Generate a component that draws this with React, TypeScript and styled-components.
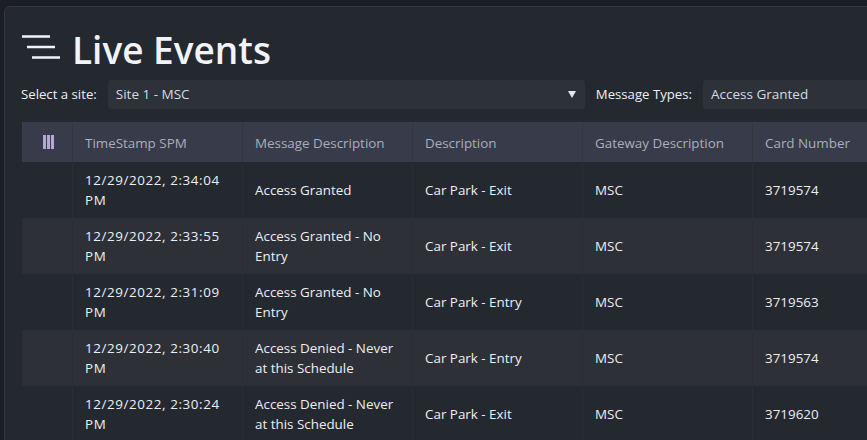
import styled, { createGlobalStyle } from "styled-components";

const GlobalStyle = createGlobalStyle`
  html, body {
    margin: 0;
    height: 100%;
    overflow: hidden;
    background: #1b1e26;
  }
  body {
    font-family: "Open Sans", "Noto Sans", sans-serif;
  }
`;

const events = [
  { time: "12/29/2022, 2:34:04 PM", message: "Access Granted", description: "Car Park - Exit", card: "3719574" },
  { time: "12/29/2022, 2:33:55 PM", message: "Access Granted - No Entry", description: "Car Park - Exit", card: "3719574" },
  { time: "12/29/2022, 2:31:09 PM", message: "Access Granted - No Entry", description: "Car Park - Entry", card: "3719563" },
  { time: "12/29/2022, 2:30:40 PM", message: "Access Denied - Never at this Schedule", description: "Car Park - Entry", card: "3719574" },
  { time: "12/29/2022, 2:30:24 PM", message: "Access Denied - Never at this Schedule", description: "Car Park - Exit", card: "3719620" },
];

export default function App() {
  return (
    <>
      <GlobalStyle />
      <Page>
        <Card>
          <TitleRow>
            <MenuIcon width="38" height="24" viewBox="0 0 38 24">
              <path d="M0 1.5h28M5 12h28M10 22.5h28" stroke="#f0f3f7" strokeWidth="2.6" fill="none" />
            </MenuIcon>
            <Title>Live Events</Title>
          </TitleRow>
          <Filters>
            <Label>Select a site:</Label>
            <Select $width={477}>
              Site 1 - MSC
              <Caret />
            </Select>
            <Label>Message Types:</Label>
            <Select $width={300}>Access Granted</Select>
          </Filters>
          <Table>
            <HeaderRow>
              <HeadCell $icon>
                <ColumnsIcon>
                  <i />
                  <i />
                  <i />
                </ColumnsIcon>
              </HeadCell>
              <HeadCell>TimeStamp SPM</HeadCell>
              <HeadCell>Message Description</HeadCell>
              <HeadCell>Description</HeadCell>
              <HeadCell>Gateway Description</HeadCell>
              <HeadCell>Card Number</HeadCell>
            </HeaderRow>
            {events.map((event, i) => (
              <Row key={event.time} $alt={i % 2 === 1}>
                <Cell />
                <TimeCell>{event.time}</TimeCell>
                <Cell>{event.message}</Cell>
                <Cell>{event.description}</Cell>
                <Cell>MSC</Cell>
                <Cell>{event.card}</Cell>
              </Row>
            ))}
          </Table>
        </Card>
      </Page>
    </>
  );
}

const Page = styled.div`
  width: 867px;
  height: 440px;
  padding: 6px 0 0 4px;
  box-sizing: border-box;
  overflow: hidden;
`;

const Card = styled.div`
  width: 1000px;
  height: 600px;
  box-sizing: border-box;
  padding: 21px 0 0 16px;
  background: #24282f;
  border: 1px solid #343841;
  border-radius: 6px;
`;

const TitleRow = styled.div`
  display: flex;
  align-items: center;
  gap: 12px;
  height: 44px;
  padding-left: 1px;
`;

const MenuIcon = styled.svg`
  margin-bottom: 6px;
`;

const Title = styled.h1`
  margin: 0;
  font-size: 37px;
  font-weight: 600;
  line-height: 44px;
  color: #f0f3f7;
`;

const Filters = styled.div`
  display: flex;
  align-items: center;
  height: 29px;
  margin-top: 8px;
`;

const Label = styled.label`
  font-size: 13.2px;
  color: #eceff3;
  margin-right: 11px;
  padding-bottom: 2px;
  white-space: nowrap;
`;

const Select = styled.div<{ $width: number }>`
  position: relative;
  width: ${(p) => p.$width}px;
  height: 29px;
  box-sizing: border-box;
  margin-right: 11px;
  padding: 0 0 2px 8px;
  display: flex;
  align-items: center;
  flex-shrink: 0;
  font-size: 13.5px;
  color: #d5dae2;
  background: #2d3138;
  border-radius: 3px;
`;

const Caret = styled.span`
  position: absolute;
  right: 9px;
  top: 11px;
  width: 0;
  height: 0;
  border-left: 4.5px solid transparent;
  border-right: 4.5px solid transparent;
  border-top: 7px solid #e4e7ec;
`;

const Table = styled.div`
  margin-top: 13px;
  margin-left: 1px;
`;

const HeaderRow = styled.div`
  display: grid;
  grid-template-columns: 50px repeat(5, 170px);
  height: 40px;
  background: #383c4a;
`;

const HeadCell = styled.div<{ $icon?: boolean }>`
  display: flex;
  align-items: center;
  box-sizing: border-box;
  justify-content: ${(p) => (p.$icon ? "center" : "flex-start")};
  padding: ${(p) => (p.$icon ? "0 0 0 3px" : "2px 0 0 12px")};
  font-size: 13.4px;
  color: #a9aebb;

  &:not(:first-child) {
    border-left: 1px solid #33363f;
  }
`;

const ColumnsIcon = styled.span`
  display: flex;
  gap: 1px;

  i {
    display: block;
    width: 3.3px;
    height: 14px;
    background: #b4a8d4;
  }
`;

const Row = styled.div<{ $alt: boolean }>`
  display: grid;
  grid-template-columns: 50px repeat(5, 170px);
  height: 56px;
  background: ${(p) => (p.$alt ? "#2d3037" : "#24282f")};
`;

const Cell = styled.div`
  display: flex;
  align-items: center;
  box-sizing: border-box;
  padding: 0 13px 0 12px;
  font-size: 13.4px;
  line-height: 20px;
  color: #eceff3;

  &:not(:first-child) {
    border-left: 1px solid #2a2d34;
  }
`;

const TimeCell = styled(Cell)`
  letter-spacing: 0.6px;
`;
